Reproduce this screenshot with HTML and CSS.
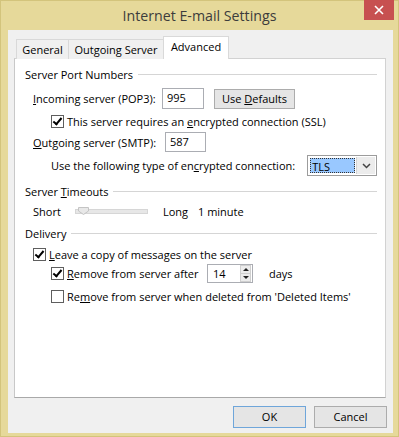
FILE: index.html
```html
<!DOCTYPE html>
<html lang="en">
<head>
    <meta charset="UTF-8">
    <title>Internet E-mail Settings</title>
    <link rel="stylesheet" href="styles.css">
</head>
<body>
<div class="window">
    <div class="titlebar">
        <span class="title">Internet E-mail Settings</span>
        <span class="close">
            <svg width="10" height="10" viewBox="0 0 10 10"><path d="M1 1 L9 9 M9 1 L1 9" stroke="#fff" stroke-width="1.6"/></svg>
        </span>
    </div>
    <div class="client">
        <div class="tabs">
            <div class="tab tab-general">General</div>
            <div class="tab tab-outgoing">Outgoing Server</div>
            <div class="tab tab-advanced active">Advanced</div>
        </div>
        <div class="panel">
            <div class="group-title g-ports"><span>Server Port Numbers</span><i></i></div>

            <div class="row row-incoming">
                <span class="lbl lbl-incoming"><u>I</u>ncoming server (POP3):</span>
                <div class="field f-incoming">995</div>
                <div class="btn btn-defaults">Use <u>D</u>efaults</div>
            </div>

            <div class="row row-ssl">
                <span class="check on"></span>
                <span class="check-text">This server requires an <u>e</u>ncrypted connection (SSL)</span>
            </div>

            <div class="row row-outgoing">
                <span class="lbl lbl-outgoing"><u>O</u>utgoing server (SMTP):</span>
                <div class="field f-outgoing">587</div>
            </div>

            <div class="row row-encrypt">
                <span class="lbl lbl-encrypt">Use the following type of en<u>c</u>rypted connection:</span>
                <div class="select">
                    <span class="select-value">TLS</span>
                    <span class="select-arrow">
                        <svg width="9" height="6" viewBox="0 0 9 6"><path d="M1 1 L4.5 4.5 L8 1" fill="none" stroke="#444" stroke-width="1.5"/></svg>
                    </span>
                </div>
            </div>

            <div class="group-title g-timeouts"><span>Server <u>T</u>imeouts</span><i></i></div>

            <div class="row row-timeout">
                <span class="lbl lbl-short">Short</span>
                <div class="slider">
                    <div class="slider-track"></div>
                    <svg class="slider-thumb" width="11" height="8" viewBox="0 0 11 8"><path d="M0.5 0.5 H10.5 V4 L5.5 7.5 L0.5 4 Z" fill="#e8e8e8" stroke="#c4c4c4"/></svg>
                </div>
                <span class="lbl lbl-long">Long</span>
                <span>1 minute</span>
            </div>

            <div class="group-title g-delivery"><span>Delivery</span><i></i></div>

            <div class="row row-leave">
                <span class="check on"></span>
                <span class="check-text"><u>L</u>eave a copy of messages on the server</span>
            </div>

            <div class="row row-remove">
                <span class="check on"></span>
                <span class="check-text lbl-remove"><u>R</u>emove from server after</span>
                <div class="spin">
                    <span class="spin-value">14</span>
                    <span class="spin-btns">
                        <span class="spin-up"></span>
                        <span class="spin-down"></span>
                    </span>
                </div>
                <span class="days">days</span>
            </div>

            <div class="row row-deleted">
                <span class="check"></span>
                <span class="check-text">Re<u>m</u>ove from server when deleted from 'Deleted Items'</span>
            </div>
        </div>
        <div class="buttons">
            <div class="btn btn-ok">OK</div>
            <div class="btn btn-cancel">Cancel</div>
        </div>
    </div>
</div>
</body>
</html>
```

FILE: styles.css
```css
body {
    margin: 0;
    font-family: 'Segoe UI', 'Open Sans', sans-serif;
    font-size: 11px;
    color: #000;
}

.window {
    width: 399px;
    height: 437px;
    background-color: #e6d99a;
    box-sizing: border-box;
    border: 1px solid #d3c47c;
}

.titlebar {
    position: relative;
    height: 29px;
    display: flex;
    justify-content: center;
    align-items: center;
}

.title {
    font-size: 14.2px;
    color: #3c3c3c;
    margin-top: -1px;
}

.close {
    position: absolute;
    top: -1px;
    right: 4px;
    width: 30px;
    height: 20px;
    background-color: #c75050;
    display: flex;
    justify-content: center;
    align-items: center;
}

.client {
    margin-left: 7px;
    width: 385px;
    height: 403px;
    background-color: #f0f0f0;
    padding: 6px 7px 0 6px;
    box-sizing: border-box;
}

/* tabs */
.tabs {
    display: flex;
    align-items: flex-end;
    padding-left: 2px;
    margin-bottom: -1px;
}

.tab {
    height: 20px;
    box-sizing: border-box;
    border: 1px solid #d9d9d9;
    border-bottom: none;
    background-color: #f0f0f0;
    text-align: center;
    line-height: 19px;
}

.tab + .tab {
    margin-left: -1px;
}

.tab-general { width: 53px; }
.tab-outgoing { width: 96px; }

.tab-advanced {
    width: 66px;
    height: 23px;
    line-height: 20px;
    background-color: #fff;
    position: relative;
    z-index: 1;
}

.panel {
    height: 340px;
    box-sizing: border-box;
    background-color: #fff;
    border: 1px solid #d2d2d2;
    border-bottom-color: #a9a9a9;
    border-left-color: #c8c8c8;
    padding: 5px 8px 0 10px;
}

/* group headings */
.group-title {
    display: flex;
    align-items: center;
    height: 20px;
}

.group-title i {
    flex: 1;
    height: 1px;
    background-color: #d5d5d5;
    margin-left: 5px;
    margin-top: 1px;
}

.g-timeouts { margin-top: 5px; }
.g-delivery { margin-top: 2px; }

/* rows */
.row {
    display: flex;
    align-items: center;
    white-space: nowrap;
}

.row-incoming { margin: 4px 0 0 8px; height: 21px; }
.row-ssl { margin: 5px 0 0 26px; height: 14px; }
.row-outgoing { margin: 4px 0 0 8px; height: 20px; }
.row-encrypt { margin: 3px 0 0 26px; height: 21px; }
.row-timeout { margin: 0 0 0 8px; height: 20px; }
.row-leave { margin: 4px 0 0 8px; height: 14px; }
.row-remove { margin: 3px 0 0 26px; height: 19px; }
.row-deleted { margin: 6px 0 0 26px; height: 14px; }

.lbl-incoming { width: 129px; }
.lbl-outgoing { width: 132px; }
.lbl-encrypt { width: 257px; }
.lbl-short { width: 42px; }
.lbl-long { width: 35px; margin-left: 15px; }
.lbl-remove { width: 140px; }

.field {
    height: 100%;
    box-sizing: border-box;
    border: 1px solid #abadb3;
    background-color: #fff;
    padding-left: 4px;
    line-height: 18px;
}

.f-incoming { width: 42px; }
.f-outgoing { width: 41px; }

/* buttons */
.btn {
    box-sizing: border-box;
    border: 1px solid #acacac;
    background-color: #e5e5e5;
    text-align: center;
}

.btn-defaults {
    width: 81px;
    height: 20px;
    line-height: 18px;
    margin-left: 10px;
}

.buttons {
    display: flex;
    justify-content: flex-end;
    gap: 8px;
    margin-top: 8px;
    margin-right: -1px;
}

.buttons .btn {
    width: 73px;
    height: 22px;
    line-height: 20px;
}

.btn-ok {
    border-color: #6fa6da;
}

/* checkboxes */
.check {
    width: 13px;
    height: 13px;
    box-sizing: border-box;
    border: 1px solid #5e5e5e;
    background-color: #fff;
    flex-shrink: 0;
    position: relative;
}

.check.on::after {
    content: "";
    position: absolute;
    left: 3px;
    top: 0;
    width: 3px;
    height: 7px;
    border: solid #000;
    border-width: 0 2px 2px 0;
    transform: rotate(40deg);
}

.check-text {
    margin-left: 3px;
}

/* combo box */
.select {
    width: 70px;
    height: 21px;
    box-sizing: border-box;
    border: 1px solid #9c9c9c;
    background-color: #fff;
    display: flex;
    padding: 1px;
}

.select-value {
    flex: 1;
    background-color: #99c8ff;
    outline: 1px dotted #333;
    outline-offset: -1px;
    padding-left: 2px;
    line-height: 17px;
    margin: 1px;
}

.select-arrow {
    width: 19px;
    box-sizing: border-box;
    border-left: 1px solid #d4d4d4;
    background-color: #ececec;
    display: flex;
    justify-content: center;
    align-items: center;
}

/* slider */
.slider {
    width: 73px;
    height: 20px;
    position: relative;
    display: flex;
    align-items: center;
}

.slider-track {
    width: 100%;
    height: 3px;
    border: 1px solid #d6d6d6;
    background-color: #e7e7e7;
}

.slider-thumb {
    position: absolute;
    left: 3px;
    top: 6px;
}

/* spin box */
.spin {
    width: 46px;
    height: 19px;
    box-sizing: border-box;
    border: 1px solid #abadb3;
    background-color: #fff;
    display: flex;
}

.spin-value {
    flex: 1;
    padding-left: 5px;
    line-height: 18px;
}

.spin-btns {
    width: 11px;
    display: flex;
    flex-direction: column;
    margin: 0 1px 0 0;
}

.spin-up,
.spin-down {
    flex: 1;
    background-color: #ececec;
    border: 1px solid #cfcfcf;
    position: relative;
}

.spin-down {
    border-top: none;
}

.spin-up::after,
.spin-down::after {
    content: "";
    position: absolute;
    left: 2px;
    border-left: 3px solid transparent;
    border-right: 3px solid transparent;
}

.spin-up::after {
    top: 2px;
    border-bottom: 3px solid #222;
}

.spin-down::after {
    top: 2px;
    border-top: 3px solid #222;
}

.days {
    margin-left: 16px;
}
```
